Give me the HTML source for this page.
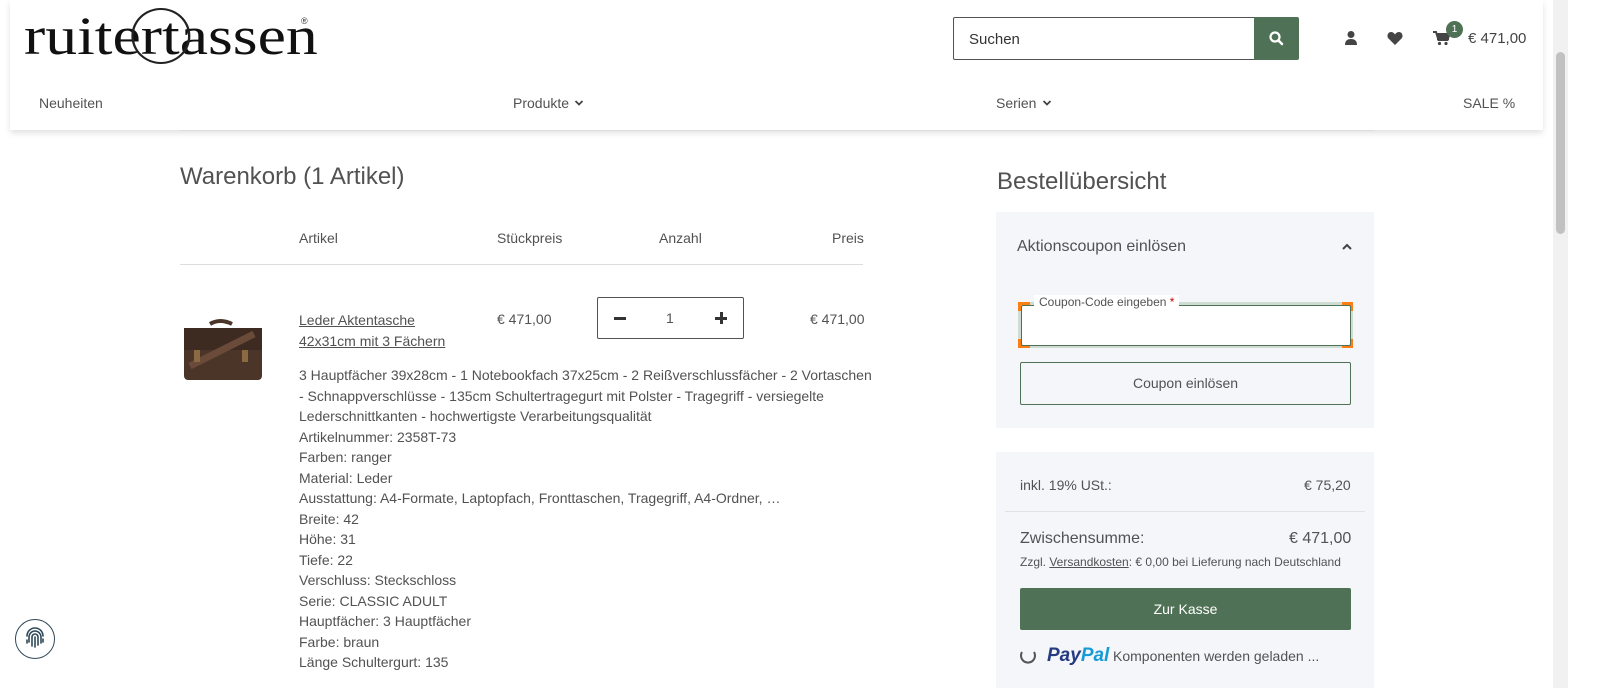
<!DOCTYPE html>
<html><head><meta charset="utf-8"><style>
*{box-sizing:border-box;margin:0;padding:0}
body{width:1600px;height:688px;overflow:hidden;font-family:"Liberation Sans",sans-serif;color:#525252;background:#fff;position:relative;font-size:14px}
.abs{position:absolute}
a{color:#525252}
.sb{position:absolute;left:1553px;top:0;width:15px;height:688px;background:#f1f1f1}
.sb i{position:absolute;left:3px;top:52px;width:9px;height:182px;background:#c1c1c1;border-radius:5px}
</style></head><body>
<div class="abs" style="left:10px;top:0;width:1533px;height:130px;background:#fff;box-shadow:0 3px 6px rgba(0,0,0,.12)"></div>
<div class="abs" style="left:24px;top:6px;font-family:'Liberation Serif',serif;font-size:54px;color:#111;line-height:60px;transform:scaleX(1.18);transform-origin:0 0;white-space:nowrap">ruite<span style="position:relative">r<span style="position:absolute;left:-8px;top:2px;width:50px;height:56px;border:2px solid #222;border-radius:50%"></span>t</span>assen</div>
<div class="abs" style="left:301px;top:16px;font-size:9px;color:#333">®</div>
<div class="abs" style="left:953px;top:17px;width:302px;height:43px;border:1px solid #525252;border-radius:2px 0 0 2px;padding:13px 15px;font-size:15px;color:#333">Suchen</div>
<div class="abs" style="left:1254px;top:17px;width:45px;height:43px;background:#4f7256;border-radius:0 2px 2px 0">
<svg width="45" height="43" viewBox="0 0 45 43"><circle cx="21" cy="20" r="4.5" stroke="#fff" stroke-width="2.2" fill="none"/><path d="M24.5 23.5l3.5 3.5" stroke="#fff" stroke-width="2.5" stroke-linecap="round"/></svg></div>
<svg class="abs" style="left:1343px;top:30px" width="16" height="16" viewBox="0 0 16 16"><circle cx="8" cy="4.5" r="3.5" fill="#444"/><path d="M2 15c0-4 2-6 6-6s6 2 6 6z" fill="#444"/></svg>
<svg class="abs" style="left:1387px;top:31px" width="16" height="14" viewBox="0 0 16 14"><path d="M8 14L1.5 7.5C-.5 5.5.5 1 4 1c2 0 3 1 4 2.5C9 2 10 1 12 1c3.5 0 4.5 4.5 2.5 6.5z" fill="#444"/></svg>
<svg class="abs" style="left:1433px;top:31px" width="17" height="15" viewBox="0 0 17 15"><path d="M0 1h3l2.5 8h9l2-6H4.5" stroke="#444" stroke-width="2" fill="#444"/><rect x="4" y="3" width="12" height="6" fill="#444"/><circle cx="6.5" cy="12.5" r="1.6" fill="#444"/><circle cx="13" cy="12.5" r="1.6" fill="#444"/></svg>
<div class="abs" style="left:1446px;top:21px;width:17px;height:17px;border-radius:50%;background:#4f7256;color:#fff;font-size:10px;text-align:center;line-height:17px">1</div>
<div class="abs" style="left:1468px;top:30px;font-size:15px;color:#444">€ 471,00</div>
<div class="abs" style="left:39px;top:95px;font-size:14px">Neuheiten</div>
<div class="abs" style="left:513px;top:95px;font-size:14px">Produkte</div>
<svg class="abs" style="left:574px;top:99px" width="10" height="8" viewBox="0 0 10 8"><path d="M1.5 2l3.5 3.5L8.5 2" stroke="#444" stroke-width="1.8" fill="none"/></svg>
<div class="abs" style="left:996px;top:95px;font-size:14px">Serien</div>
<svg class="abs" style="left:1042px;top:99px" width="10" height="8" viewBox="0 0 10 8"><path d="M1.5 2l3.5 3.5L8.5 2" stroke="#444" stroke-width="1.8" fill="none"/></svg>
<div class="abs" style="left:1463px;top:95px;font-size:14px">SALE %</div>
<div class="abs" style="left:180px;top:130px;width:1194px;height:1px;background:#ddd"></div>

<div class="abs" style="left:180px;top:163px;font-size:24px;color:#525252">Warenkorb (1 Artikel)</div>
<div class="abs" style="left:299px;top:230px">Artikel</div>
<div class="abs" style="left:497px;top:230px">Stückpreis</div>
<div class="abs" style="left:659px;top:230px">Anzahl</div>
<div class="abs" style="left:832px;top:230px">Preis</div>
<div class="abs" style="left:180px;top:264px;width:683px;height:1px;background:#ddd"></div>
<svg class="abs" style="left:182px;top:316px" width="82" height="66" viewBox="0 0 82 66"><path d="M28 8q10-6 22 0" stroke="#4a3528" stroke-width="4" fill="none"/><rect x="2" y="12" width="78" height="52" rx="4" fill="#4b3428"/><rect x="2" y="12" width="78" height="22" fill="#3d2a20"/><path d="M8 50L72 18" stroke="#6a4a38" stroke-width="7"/><rect x="12" y="34" width="6" height="12" fill="#8a6a40"/><rect x="60" y="34" width="6" height="12" fill="#8a6a40"/></svg>
<div class="abs" style="left:299px;top:310px;line-height:21px"><a href="#">Leder Aktentasche<br>42x31cm mit 3 Fächern</a></div>
<div class="abs" style="left:497px;top:311px">€ 471,00</div>
<div class="abs" style="left:597px;top:297px;width:147px;height:42px;border:1px solid #525252;border-radius:2px">
<div class="abs" style="left:16px;top:19px;width:12px;height:2.5px;background:#333"></div>
<div class="abs" style="left:68px;top:12px;font-size:14px">1</div>
<div class="abs" style="left:117px;top:19px;width:12px;height:2.5px;background:#333"></div>
<div class="abs" style="left:122px;top:14px;width:2.5px;height:12px;background:#333"></div></div>
<div class="abs" style="left:810px;top:311px">€ 471,00</div>
<div class="abs" style="left:299px;top:365px;width:600px;line-height:20.5px"><span style="white-space:nowrap">3 Hauptfächer 39x28cm - 1 Notebookfach 37x25cm - 2 Reißverschlussfächer - 2 Vortaschen</span><br>- Schnappverschlüsse - 135cm Schultertragegurt mit Polster - Tragegriff - versiegelte<br>Lederschnittkanten - hochwertigste Verarbeitungsqualität<br>Artikelnummer: 2358T-73<br>Farben: ranger<br>Material: Leder<br>Ausstattung: A4-Formate, Laptopfach, Fronttaschen, Tragegriff, A4-Ordner, …<br>Breite: 42<br>Höhe: 31<br>Tiefe: 22<br>Verschluss: Steckschloss<br>Serie: CLASSIC ADULT<br>Hauptfächer: 3 Hauptfächer<br>Farbe: braun<br>Länge Schultergurt: 135</div>

<div class="abs" style="left:997px;top:168px;font-size:24px">Bestellübersicht</div>
<div class="abs" style="left:996px;top:212px;width:378px;height:216px;background:#f5f6fa"></div>
<div class="abs" style="left:1017px;top:238px;font-size:16px">Aktionscoupon einlösen</div>
<svg class="abs" style="left:1341px;top:242px" width="12" height="10" viewBox="0 0 12 10"><path d="M2 7l4-4 4 4" stroke="#444" stroke-width="2" fill="none"/></svg>
<div class="abs" style="left:1018px;top:302px;width:335px;height:46px;border:3px solid #fd7e14;background:#cfdcd2"></div>
<div class="abs" style="left:1030px;top:302px;width:312px;height:46px;background:#cfdcd2"></div>
<div class="abs" style="left:1018px;top:311px;width:335px;height:28px;background:#cfdcd2"></div>
<div class="abs" style="left:1021px;top:305px;width:330px;height:41px;background:#fff;border:1px solid #4f7256;border-radius:2px"></div>
<div class="abs" style="left:1034px;top:295px;background:#fff;padding:0 5px;font-size:12px;color:#525252">Coupon-Code eingeben <span style="color:#c00">*</span></div>
<div class="abs" style="left:1020px;top:362px;width:331px;height:43px;border:1px solid #4f7256;border-radius:2px;text-align:center;line-height:41px;font-size:14px">Coupon einlösen</div>

<div class="abs" style="left:996px;top:452px;width:378px;height:236px;background:#f5f6fa"></div>
<div class="abs" style="left:1020px;top:477px">inkl. 19% USt.:</div>
<div class="abs" style="left:1304px;top:477px">€ 75,20</div>
<div class="abs" style="left:1005px;top:511px;width:360px;height:1px;background:#e2e2e2"></div>
<div class="abs" style="left:1020px;top:530px;font-size:16px">Zwischensumme:</div>
<div class="abs" style="left:1289px;top:530px;font-size:16px">€ 471,00</div>
<div class="abs" style="left:1020px;top:555px;font-size:12px">Zzgl. <a href="#">Versandkosten</a>: € 0,00 bei Lieferung nach Deutschland</div>
<div class="abs" style="left:1020px;top:588px;width:331px;height:42px;background:#4f7256;border-radius:2px;color:#fff;text-align:center;line-height:42px">Zur Kasse</div>
<svg class="abs" style="left:1019px;top:646px" width="18" height="18" viewBox="0 0 18 18"><path d="M3 6a7 7 0 1 0 12 0" stroke="#555" stroke-width="2" fill="none"/></svg>
<div class="abs" style="left:1047px;top:645px;font-size:19px;font-weight:bold;font-style:italic;color:#253b80">Pay<span style="color:#179bd7">Pal</span></div>
<div class="abs" style="left:1113px;top:648px;font-size:14px">Komponenten werden geladen ...</div>

<div class="abs" style="left:15px;top:619px;width:40px;height:40px;border:1.5px solid #2f4858;border-radius:50%;background:#fff">
<svg width="37" height="37" viewBox="0 0 37 37"><g stroke="#2f4858" stroke-width="1.6" fill="none" stroke-linecap="round"><path d="M11 16a8 8 0 0 1 16 0"/><path d="M13 22v-5a6 6 0 0 1 12 0v6"/><path d="M16 26v-9a3 3 0 0 1 6 0v8"/><path d="M19 17v10"/><path d="M11 20v3M27 19v3"/></g></svg></div>
<div class="sb"><i></i></div>
</body></html>
